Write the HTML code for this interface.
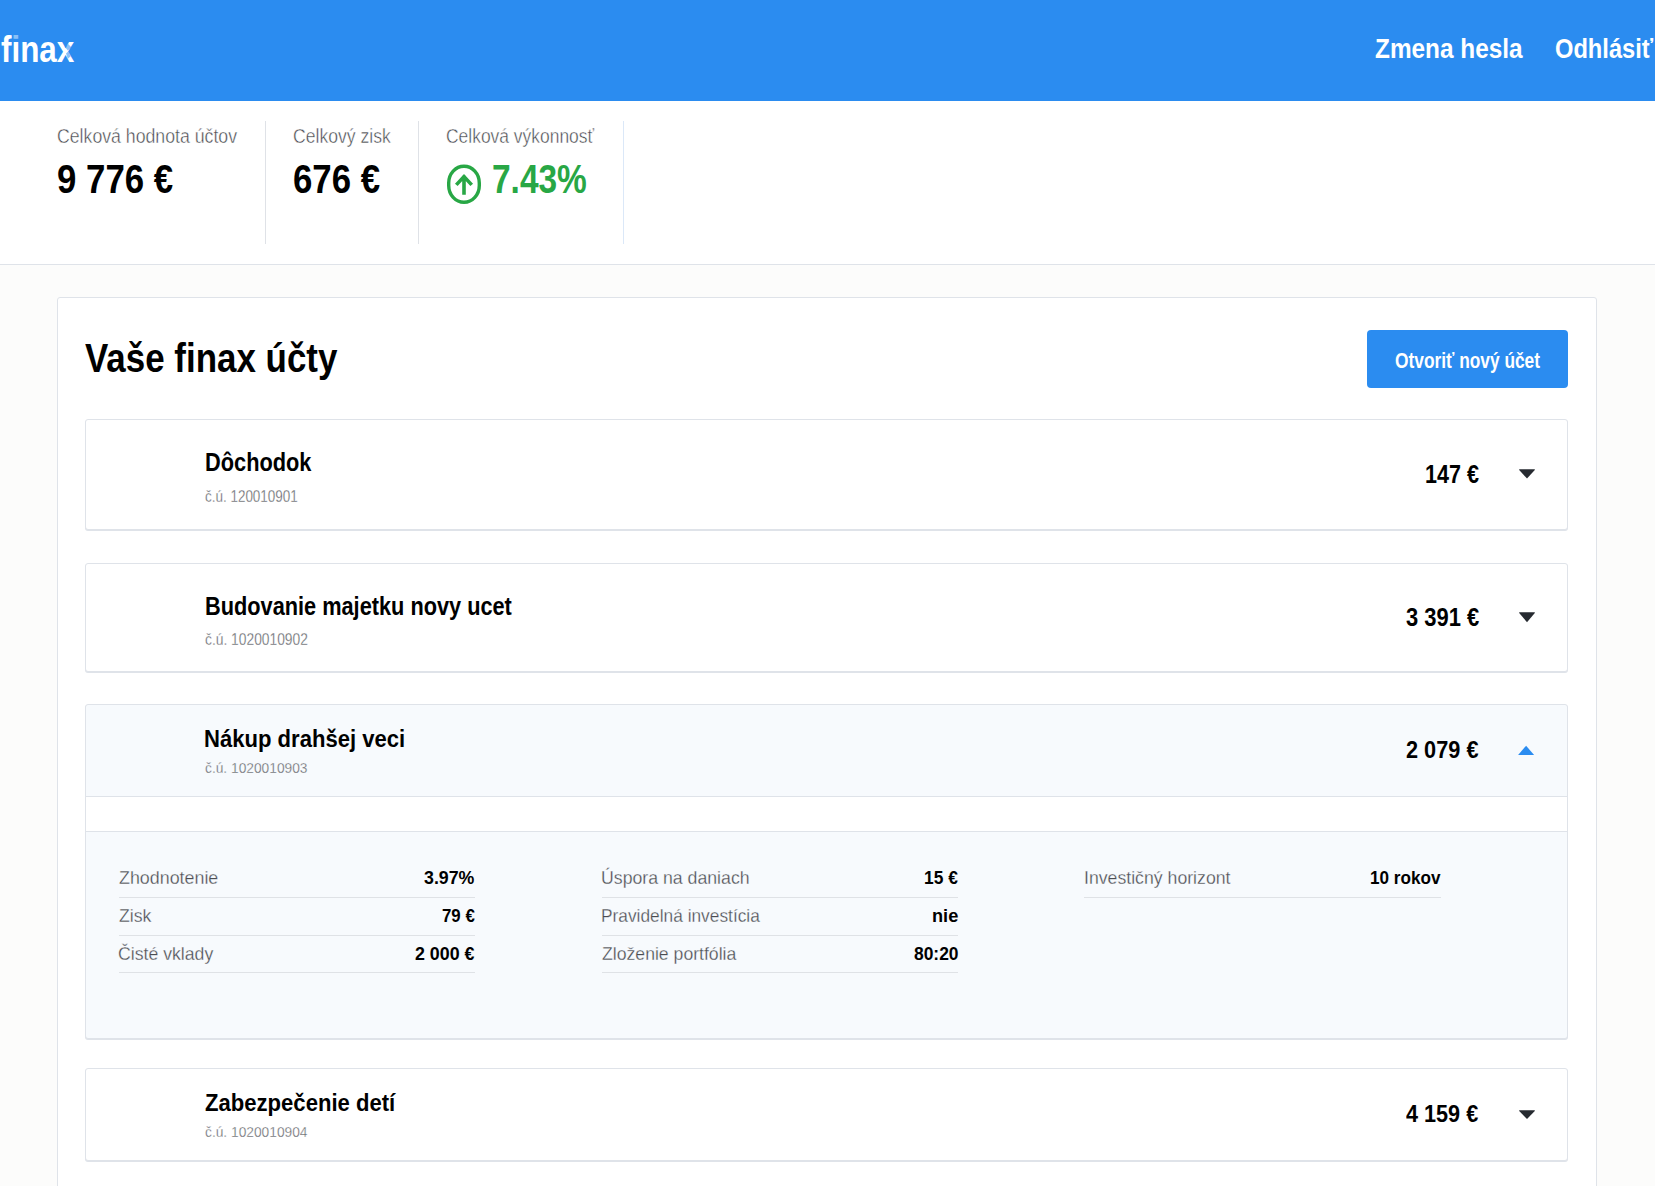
<!DOCTYPE html>
<html><head><meta charset="utf-8"><title>finax</title>
<style>
html,body{margin:0;padding:0}
body{width:1655px;height:1186px;overflow:hidden;position:relative;background:#fcfcfb;font-family:"Liberation Sans",sans-serif}
.t{position:absolute;white-space:pre;line-height:1;transform-origin:0 0;font-family:"Liberation Sans",sans-serif}
.abs{position:absolute;box-sizing:border-box}
</style></head><body>

<div class="abs" style="left:0;top:0;width:1655px;height:101px;background:#2b8cf0"></div>
<div class="abs" style="left:0;top:101px;width:1655px;height:164px;background:#fff;border-bottom:1px solid #dfe3e9"></div>
<div class="abs" style="left:265px;top:121px;width:1px;height:123px;background:#dfe2e7"></div>
<div class="abs" style="left:418px;top:121px;width:1px;height:123px;background:#dfe2e7"></div>
<div class="abs" style="left:623px;top:121px;width:1px;height:123px;background:#dbe8f8"></div>
<svg class="abs" style="left:445px;top:162px" width="40" height="45" viewBox="0 0 40 45"><rect x="3.7" y="4.3" width="30.6" height="36" rx="15.3" ry="16.8" fill="none" stroke="#28a745" stroke-width="3.4"/><path d="M19 32.8 V13.5 M11.3 22.9 L19 14.6 L26.7 22.9" fill="none" stroke="#28a745" stroke-width="3.6"/></svg>
<div class="abs" style="left:57px;top:297px;width:1540px;height:1000px;background:#fff;border:1px solid #dfe3e9;border-radius:3px"></div>
<div class="abs" style="left:1367px;top:330px;width:201px;height:58px;background:#2b8cf0;border-radius:4px"></div>
<div class="abs" style="left:85px;top:419px;width:1483px;height:111px;background:#fff;border:1px solid #dfe3e9;border-radius:3px;box-shadow:0 1px 0 #dfe3e9"></div>
<div class="abs" style="left:85px;top:563px;width:1483px;height:109px;background:#fff;border:1px solid #dfe3e9;border-radius:3px;box-shadow:0 1px 0 #dfe3e9"></div>
<div class="abs" style="left:85px;top:704px;width:1483px;height:335px;background:#f7fafd;border:1px solid #dfe3e9;border-radius:3px;box-shadow:0 1px 0 #dfe3e9"></div>
<div class="abs" style="left:85px;top:1068px;width:1483px;height:93px;background:#fff;border:1px solid #dfe3e9;border-radius:3px;box-shadow:0 1px 0 #dfe3e9"></div>
<div class="abs" style="left:86px;top:796px;width:1481px;height:36px;background:#fff;border-top:1px solid #dfe3e9;border-bottom:1px solid #dfe3e9"></div>
<div class="abs" style="left:119px;top:897px;width:356px;height:1px;background:#dfe2e6"></div>
<div class="abs" style="left:119px;top:935px;width:356px;height:1px;background:#dfe2e6"></div>
<div class="abs" style="left:119px;top:972px;width:356px;height:1px;background:#dfe2e6"></div>
<div class="abs" style="left:602px;top:897px;width:356px;height:1px;background:#dfe2e6"></div>
<div class="abs" style="left:602px;top:935px;width:356px;height:1px;background:#dfe2e6"></div>
<div class="abs" style="left:602px;top:972px;width:356px;height:1px;background:#dfe2e6"></div>
<div class="abs" style="left:1084px;top:897px;width:357px;height:1px;background:#dfe2e6"></div>
<svg class="abs" style="left:1512px;top:464px" width="30" height="20" viewBox="1512 464 30 20"><polygon points="1519.2,469.2 1534.8,469.2 1534.8,470.0 1527,478.6 1519.2,470.0" fill="#262a30"/></svg>
<svg class="abs" style="left:1512px;top:607.3px" width="30" height="20" viewBox="1512 607.3 30 20"><polygon points="1519.2,612.5 1534.8,612.5 1534.8,613.3 1527,622.5 1519.2,613.3" fill="#262a30"/></svg>
<svg class="abs" style="left:1512px;top:1105px" width="30" height="20" viewBox="1512 1105 30 20"><polygon points="1519.2,1110.2 1534.8,1110.2 1534.8,1111.0 1527,1119.0 1519.2,1111.0" fill="#262a30"/></svg>
<svg class="abs" style="left:1512px;top:740px" width="30" height="20" viewBox="1512 740 30 20"><polygon points="1518.1,755.1 1534.1,755.1 1526.1,745.7" fill="#2b8cf0"/></svg>
<span class="t" style="left:1375.15px;top:34.00px;font-size:28.5px;font-weight:700;color:#fff;transform:scaleX(0.8547)">Zmena hesla</span>
<span class="t" style="left:1555.17px;top:34.00px;font-size:28.5px;font-weight:700;color:#fff;transform:scaleX(0.8305)">Odhlásiť</span>
<span class="t" style="left:56.64px;top:125.70px;font-size:20.5px;font-weight:400;color:#46484d;-webkit-text-stroke:0.45px #fff;transform:scaleX(0.8630)">Celková hodnota účtov</span>
<span class="t" style="left:56.64px;top:158.50px;font-size:40.5px;font-weight:700;color:#000;transform:scaleX(0.8597)">9 776 €</span>
<span class="t" style="left:293.14px;top:125.70px;font-size:20.5px;font-weight:400;color:#46484d;-webkit-text-stroke:0.45px #fff;transform:scaleX(0.8584)">Celkový zisk</span>
<span class="t" style="left:292.84px;top:158.80px;font-size:40.5px;font-weight:700;color:#000;transform:scaleX(0.8580)">676 €</span>
<span class="t" style="left:446.15px;top:126.00px;font-size:20.5px;font-weight:400;color:#46484d;-webkit-text-stroke:0.45px #fff;transform:scaleX(0.8506)">Celková výkonnosť</span>
<span class="t" style="left:491.87px;top:159.00px;font-size:40.5px;font-weight:700;color:#28a745;transform:scaleX(0.8257)">7.43%</span>
<span class="t" style="left:85.00px;top:337.60px;font-size:40.5px;font-weight:700;color:#000;transform:scaleX(0.8625)">Vaše finax účty</span>
<span class="t" style="left:1395.23px;top:349.60px;font-size:22.5px;font-weight:700;color:#fff;transform:scaleX(0.7701)">Otvoriť nový účet</span>
<span class="t" style="left:205.18px;top:448.60px;font-size:26.5px;font-weight:700;color:#000;transform:scaleX(0.8217)">Dôchodok</span>
<span class="t" style="left:205.00px;top:488.70px;font-size:16px;font-weight:400;color:#606267;-webkit-text-stroke:0.3px #fff;transform:scaleX(0.8409)">č.ú. 120010901</span>
<span class="t" style="left:1425.19px;top:461.00px;font-size:26.5px;font-weight:700;color:#000;transform:scaleX(0.8123)">147 €</span>
<span class="t" style="left:205.18px;top:593.00px;font-size:26.5px;font-weight:700;color:#000;transform:scaleX(0.8204)">Budovanie majetku novy ucet</span>
<span class="t" style="left:205.00px;top:631.80px;font-size:16px;font-weight:400;color:#606267;-webkit-text-stroke:0.3px #fff;transform:scaleX(0.8630)">č.ú. 1020010902</span>
<span class="t" style="left:1405.60px;top:604.00px;font-size:26.5px;font-weight:700;color:#000;transform:scaleX(0.8273)">3 391 €</span>
<span class="t" style="left:204.44px;top:728.00px;font-size:23px;font-weight:700;color:#000;transform:scaleX(0.9594)">Nákup drahšej veci</span>
<span class="t" style="left:205.40px;top:760.80px;font-size:14px;font-weight:400;color:#606267;-webkit-text-stroke:0.3px #f7fafd;transform:scaleX(0.9827)">č.ú. 1020010903</span>
<span class="t" style="left:1406.00px;top:739.00px;font-size:23px;font-weight:700;color:#000;transform:scaleX(0.9442)">2 079 €</span>
<span class="t" style="left:205.40px;top:1091.70px;font-size:23px;font-weight:700;color:#000;transform:scaleX(0.9603)">Zabezpečenie detí</span>
<span class="t" style="left:205.40px;top:1124.70px;font-size:14px;font-weight:400;color:#606267;-webkit-text-stroke:0.3px #fff;transform:scaleX(0.9827)">č.ú. 1020010904</span>
<span class="t" style="left:1406.00px;top:1103.00px;font-size:23px;font-weight:700;color:#000;transform:scaleX(0.9403)">4 159 €</span>
<span class="t" style="left:119.30px;top:868.00px;font-size:19px;font-weight:400;color:#4a4c51;-webkit-text-stroke:0.3px #f7fafd;transform:scaleX(0.9400)">Zhodnotenie</span>
<span class="t" style="left:119.30px;top:906.00px;font-size:19px;font-weight:400;color:#4a4c51;-webkit-text-stroke:0.3px #f7fafd;transform:scaleX(0.9300)">Zisk</span>
<span class="t" style="left:118.37px;top:944.00px;font-size:19px;font-weight:400;color:#4a4c51;-webkit-text-stroke:0.3px #f7fafd;transform:scaleX(0.9300)">Čisté vklady</span>
<span class="t" style="left:601.47px;top:868.00px;font-size:19px;font-weight:400;color:#4a4c51;-webkit-text-stroke:0.3px #f7fafd;transform:scaleX(0.9316)">Úspora na daniach</span>
<span class="t" style="left:601.49px;top:906.00px;font-size:19px;font-weight:400;color:#4a4c51;-webkit-text-stroke:0.3px #f7fafd;transform:scaleX(0.9115)">Pravidelná investícia</span>
<span class="t" style="left:602.40px;top:944.00px;font-size:19px;font-weight:400;color:#4a4c51;-webkit-text-stroke:0.3px #f7fafd;transform:scaleX(0.9283)">Zloženie portfólia</span>
<span class="t" style="left:1084.27px;top:868.00px;font-size:19px;font-weight:400;color:#4a4c51;-webkit-text-stroke:0.3px #f7fafd;transform:scaleX(0.9308)">Investičný horizont</span>
<span class="t" style="left:423.80px;top:868.00px;font-size:19px;font-weight:700;color:#000;transform:scaleX(0.9352)">3.97%</span>
<span class="t" style="left:441.50px;top:906.00px;font-size:19px;font-weight:700;color:#000;transform:scaleX(0.8865)">79 €</span>
<span class="t" style="left:415.20px;top:944.00px;font-size:19px;font-weight:700;color:#000;transform:scaleX(0.9381)">2 000 €</span>
<span class="t" style="left:924.09px;top:868.00px;font-size:19px;font-weight:700;color:#000;transform:scaleX(0.9139)">15 €</span>
<span class="t" style="left:932.04px;top:906.00px;font-size:19px;font-weight:700;color:#000;transform:scaleX(0.9577)">nie</span>
<span class="t" style="left:913.90px;top:944.00px;font-size:19px;font-weight:700;color:#000;transform:scaleX(0.9167)">80:20</span>
<span class="t" style="left:1370.10px;top:868.00px;font-size:19px;font-weight:700;color:#000;transform:scaleX(0.9013)">10 rokov</span>
<span class="t" style="left:1.00px;top:31.00px;font-size:37px;font-weight:700;color:#fff;transform:scaleX(0.8488)">finax</span>
<svg class="abs" style="left:0;top:0" width="90" height="70" viewBox="0 0 90 70"><rect x="13.5" y="34.5" width="5.5" height="4.5" fill="#2b8cf0" fill-opacity="0.55"/><polygon points="65.0,47.3 68.3,44.0 71.2,47.2 67.9,50.6" fill="#2b8cf0" fill-opacity="0.55"/><polygon points="66.0,53.4 68.2,51.6 70.6,56.2 67.9,58.8" fill="#2b8cf0" fill-opacity="0.55"/></svg>
</body></html>
